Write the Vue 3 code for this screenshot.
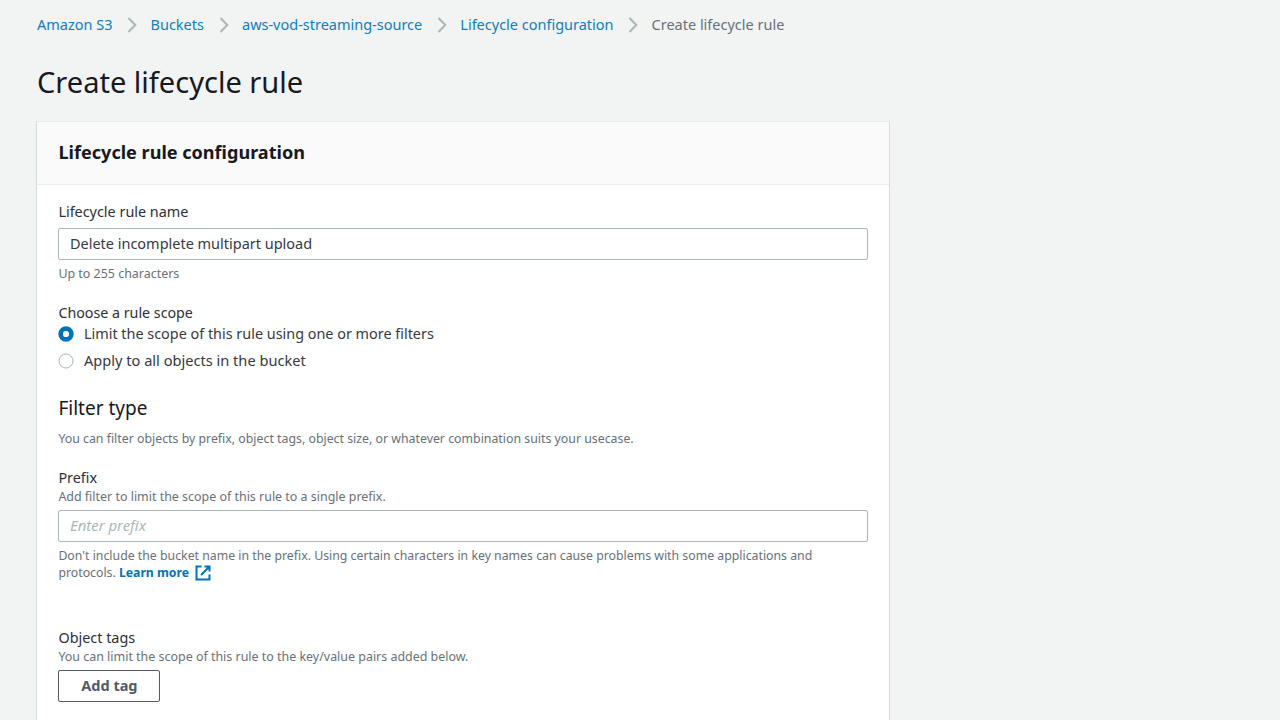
<script setup>
const crumbs = ['Amazon S3', 'Buckets', 'aws-vod-streaming-source', 'Lifecycle configuration']
</script>

<template>
  <main class="page">
    <nav class="crumbs">
      <template v-for="c in crumbs" :key="c">
        <a class="crumb">{{ c }}</a>
        <svg class="chevron" width="12" height="18" viewBox="0 0 12 18"><path d="M2.5 2 9.3 9 2.5 16" /></svg>
      </template>
      <span class="current">Create lifecycle rule</span>
    </nav>
    <h1>Create lifecycle rule</h1>

    <section class="card">
      <header><h2>Lifecycle rule configuration</h2></header>
      <div class="body">
        <div class="field">
          <div class="label">Lifecycle rule name</div>
          <div class="input name">Delete incomplete multipart upload</div>
          <div class="hint wide">Up to 255 characters</div>
        </div>

        <div class="scope">
          <div class="label choose">Choose a rule scope</div>
          <div class="option">
            <svg class="radio" width="16" height="16" viewBox="0 0 16 16"><circle class="on" cx="8" cy="8" r="5.4" /></svg>
            <span>Limit the scope of this rule using one or more filters</span>
          </div>
          <div class="option all">
            <svg class="radio" width="16" height="16" viewBox="0 0 16 16"><circle class="off" cx="8" cy="8" r="7" /></svg>
            <span>Apply to all objects in the bucket</span>
          </div>
        </div>

        <div class="filter">
          <h3>Filter type</h3>
          <div class="hint">You can filter objects by prefix, object tags, object size, or whatever combination suits your usecase.</div>
        </div>

        <div class="prefix">
          <div class="label">Prefix</div>
          <div class="hint wide">Add filter to limit the scope of this rule to a single prefix.</div>
          <div class="input placeholder">Enter prefix</div>
          <div class="hint note">Don't include the bucket name in the prefix. Using certain characters in key names can cause problems with some applications and<br />protocols. <a class="learn">Learn more<svg class="ext" width="16" height="16" viewBox="0 0 16 16"><path d="M6.5 1.5H1.5v13h13V9.5M9.5 1.5h5v5M14.2 1.8 6 10" /></svg></a></div>
        </div>

        <div class="tags">
          <div class="label">Object tags</div>
          <div class="hint wide">You can limit the scope of this rule to the key/value pairs added below.</div>
          <button class="add">Add tag</button>
        </div>
      </div>
    </section>
  </main>
</template>

<style>
html, body { background: #f2f3f3; overflow: hidden; }
</style>

<style scoped>
.page {
  box-sizing: border-box;
  height: 720px;
  overflow: hidden;
  padding: 15px 0 0 37px;
  background: #f2f3f3;
  color: #36393f;
  font: 14.4px/20px "Noto Sans", "Open Sans", sans-serif;
}
.crumbs { display: flex; align-items: center; height: 20px; white-space: nowrap; font-size: 14.49px; line-height: 18px; }
.crumb { color: #0f7dc2; }
.chevron { margin: 0 12.4px 0 13.7px; fill: none; stroke: #aab7b8; stroke-width: 2; }
.current { color: #687078; }
h1 { margin: 29px 0 0; font-size: 29.05px; line-height: 36px; font-weight: 400; color: #16191f; }
.card {
  box-sizing: border-box;
  width: 854px;
  height: 640px;
  margin: 21px 0 0 -1px;
  background: #fff;
  border: 1px solid #d5dbdb;
  border-top-color: #eaeded;
}
header { box-sizing: border-box; height: 63px; padding: 19px 21.5px 0; background: #fafafa; border-bottom: 1px solid #eaeded; }
h2 { margin: 0; font-size: 18.07px; line-height: 22px; font-weight: 700; color: #16191f; }
.body { padding: 17px 21px 0 21.4px; }
.label { color: #2b2f36; line-height: 20px; }
.input {
  box-sizing: border-box;
  height: 32px;
  padding: 0 10.6px;
  border: 1px solid #aab7b8;
  border-radius: 2px;
  line-height: 30px;
}
.name { margin: 6px 0 5px; font-size: 14.48px; }
.placeholder { margin: 5px 0; color: #aab7b8; font-size: 14.9px; font-style: italic; line-height: 28px; }
.hint { font-size: 12.33px; line-height: 17px; color: #687078; white-space: nowrap; }
.wide { font-size: 12.44px; }
.note { font-size: 12.3px; }
.choose { font-size: 14.25px; }
.scope { margin-top: 21px; }
.option { display: flex; align-items: center; height: 20px; margin-top: 1px; }
.option + .option { margin-top: 7px; }
.all { font-size: 14.6px; line-height: 18px; }
.all span { padding-bottom: 2px; }
.radio { margin: 0 10.1px 0 -.5px; fill: #fff; }
.on { stroke: #0073bb; stroke-width: 4.6; }
.off { stroke: #aab7b8; stroke-width: 1; }
.filter { margin-top: 25px; }
h3 { margin: 0 0 10px; font-size: 19px; line-height: 24px; font-weight: 400; color: #16191f; }
.prefix { margin-top: 21px; }
.learn { color: #0073bb; font-weight: 700; font-size: 12.2px; }
.ext { margin-left: 6.5px; vertical-align: -4px; fill: none; stroke: #0073bb; stroke-width: 2; }
.tags { margin-top: 47px; }
.add {
  display: block;
  box-sizing: border-box;
  width: 102px;
  height: 32px;
  margin-top: 5px;
  padding: 0 0 2px;
  background: #fff;
  border: 1px solid #545b64;
  border-radius: 2px;
  color: #545b64;
  font: 700 14.5px/28px "Noto Sans", sans-serif;
}
</style>
